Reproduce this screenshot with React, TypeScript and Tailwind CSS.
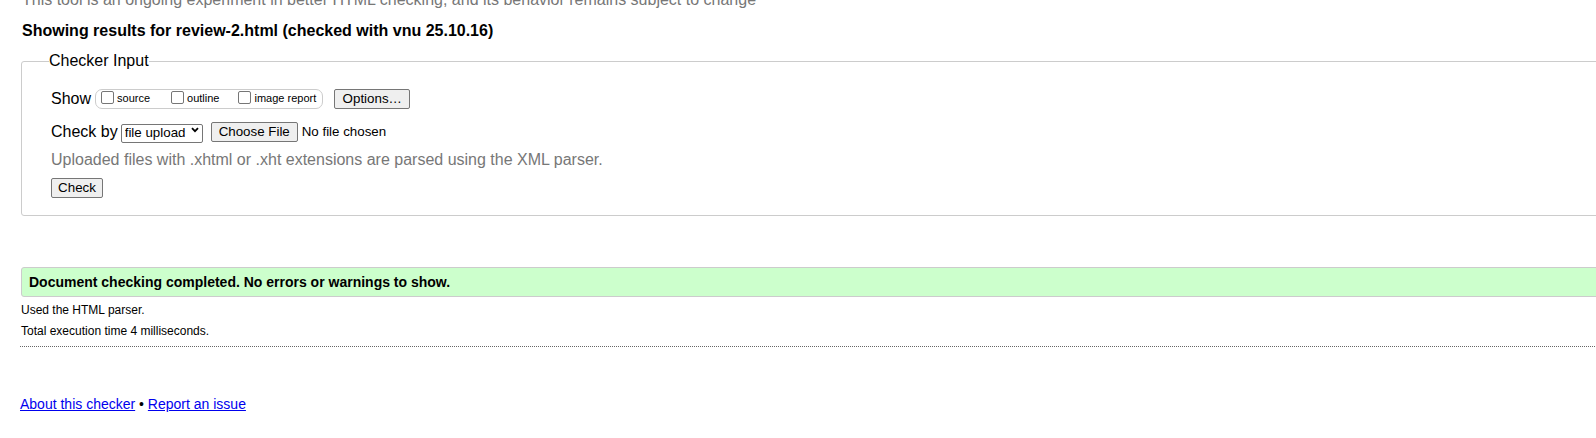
import React from "react";

function Chevron() {
  return (
    <svg
      width="8"
      height="6"
      viewBox="0 0 8 6"
      className="pointer-events-none absolute right-[4px] top-[7px]"
    >
      <path d="M1 1.2 L4 4.2 L7 1.2" fill="none" stroke="#000" strokeWidth="1.8" />
    </svg>
  );
}

function Check({ label, className }: { label: string; className?: string }) {
  return (
    <label className={"flex items-center " + (className ?? "")}>
      <input
        type="checkbox"
        className="m-0 mb-[3px] h-[13px] w-[13px] appearance-none rounded-[2px] border border-[#767676] bg-white"
      />
      <span className="ml-[3px] text-[11px] leading-[13px]">{label}</span>
    </label>
  );
}

const btn =
  "flex items-center justify-center h-[20px] border border-[#767676] rounded-[2px] bg-[#efefef] text-[13.33px] leading-[16px] text-black";

export default function App() {
  return (
    <div className="w-full overflow-hidden bg-white text-black font-['Liberation_Sans',Arial,sans-serif]">
      <div className="flex w-[1640px] flex-col items-start pl-[21px]">
        <p className="-mt-[9px] ml-px whitespace-nowrap text-[16px] leading-[18px] text-[#777]">
          This tool is an ongoing experiment in better HTML checking, and its behavior remains subject to change
        </p>
        <p className="ml-px mt-[13px] whitespace-nowrap text-[16px] font-bold leading-[18px]">
          Showing results for review-2.html (checked with vnu 25.10.16)
        </p>

        <fieldset className="mt-[12px] w-full rounded-[3px] border border-[#ccc] pb-[17px] pl-[28px] pr-0 pt-0">
          <legend className="-ml-px px-0 text-[16px] leading-[18px]">Checker Input</legend>

          <div className="ml-px mt-[18px] flex h-[21px] items-center">
            <span className="text-[16px] leading-[18px]">Show</span>
            <div className="ml-[4px] flex h-[20px] items-center rounded-[7px] border border-[#ccc] pl-[5px] pr-[6px]">
              <Check label="source" />
              <Check label="outline" className="ml-[21px]" />
              <Check label="image report" className="ml-[19px]" />
            </div>
            <button className={btn + " ml-[11px] w-[76px]"}>Options…</button>
          </div>

          <div className="ml-px mt-[13px] flex h-[20px] items-center">
            <span className="text-[16px] leading-[18px]">Check by</span>
            <div className="relative ml-[3px]">
              <select className="h-[19px] w-[82px] appearance-none rounded-[2px] border border-[#767676] bg-white pl-[3px] text-[13.33px] leading-[16px]">
                <option>file upload</option>
              </select>
              <Chevron />
            </div>
            <button className={btn + " ml-[8px] w-[87px]"}>Choose File</button>
            <span className="ml-[4px] text-[13.33px] leading-[16px]">No file chosen</span>
          </div>

          <p className="ml-px mt-[9px] whitespace-nowrap text-[16px] leading-[18px] text-[#777]">
            Uploaded files with .xhtml or .xht extensions are parsed using the XML parser.
          </p>

          <button className={btn + " ml-px mt-[9px] w-[52px]"}>Check</button>
        </fieldset>

        <div className="mt-[51px] flex h-[30px] w-full items-center rounded-[3px] border border-[#ccc] bg-[#ccffcc] pl-[7px]">
          <span className="text-[14px] font-bold leading-[16px]">
            Document checking completed. No errors or warnings to show.
          </span>
        </div>

        <p className="mt-[6px] text-[12px] leading-[14px]">Used the HTML parser.</p>
        <p className="mt-[7px] text-[12px] leading-[14px]">Total execution time 4 milliseconds.</p>

        <div className="-ml-px mt-[8px] w-full border-t border-dotted border-[#666]" />

        <p className="-ml-px mt-[49px] text-[14px] leading-[16px]">
          <a href="#" className="text-[#0000ee] underline">
            About this checker
          </a>{" "}
          •{" "}
          <a href="#" className="text-[#0000ee] underline">
            Report an issue
          </a>
        </p>
        <div className="h-[26px]" />
      </div>
    </div>
  );
}
